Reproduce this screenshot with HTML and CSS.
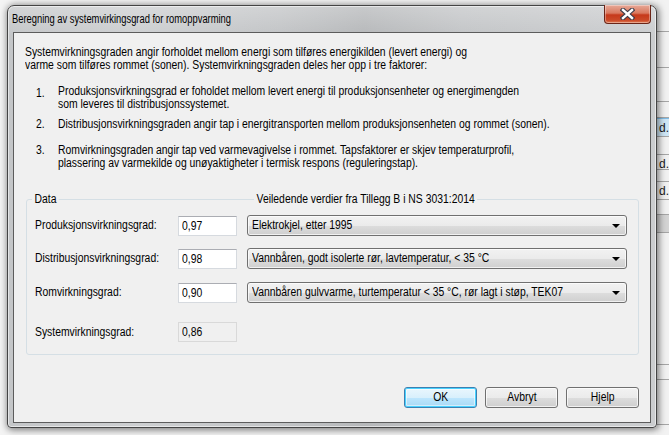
FILE: index.html
```html
<!DOCTYPE html>
<html lang="no">
<head>
  <meta charset="utf-8">
  <title>Beregning av systemvirkingsgrad for romoppvarming</title>
  <link rel="stylesheet" href="styles.css">
</head>
<body>
<div class="desk">
  <div class="window">
    <div class="titlebar">
      <span class="caption n">Beregning av systemvirkingsgrad for romoppvarming</span>
      <div class="close">
        <svg width="15" height="12" viewBox="0 0 15 12">
          <path d="M3 2 L12 10 M12 2 L3 10" stroke="#3b3b4a" stroke-width="4.6" stroke-linecap="square"/>
          <path d="M3 2 L12 10 M12 2 L3 10" stroke="#fff" stroke-width="2.4" stroke-linecap="square"/>
        </svg>
      </div>
    </div>

    <div class="client">
      <p class="intro n">Systemvirkningsgraden angir forholdet mellom energi som tilføres energikilden (levert energi) og<br>
        varme som tilføres rommet (sonen). Systemvirkningsgraden deles her opp i tre faktorer:</p>

      <div class="item item1">
        <span class="num n">1.</span>
        <span class="txt n">Produksjonsvirkningsgrad er foholdet mellom levert energi til produksjonsenheter og energimengden<br>
          som leveres til distribusjonssystemet.</span>
      </div>
      <div class="item item2">
        <span class="num n">2.</span>
        <span class="txt n">Distribusjonsvirkningsgraden angir tap i energitransporten mellom produksjonsenheten og rommet (sonen).</span>
      </div>
      <div class="item item3">
        <span class="num n">3.</span>
        <span class="txt n">Romvirkningsgraden angir tap ved varmevagivelse i rommet. Tapsfaktorer er skjev temperaturprofil,<br>
          plassering av varmekilde og unøyaktigheter i termisk respons (reguleringstap).</span>
      </div>

      <div class="group">
        <div class="group-head">
          <span class="cap cap-data n">Data</span>
          <span class="cap cap-ref n">Veiledende verdier fra Tillegg B i NS 3031:2014</span>
        </div>
        <div class="row row1">
          <span class="label n">Produksjonsvirkningsgrad:</span>
          <div class="field"><span class="n">0,97</span></div>
          <div class="combo"><span class="combo-text n">Elektrokjel, etter 1995</span><i class="arrow"></i></div>
        </div>
        <div class="row row2">
          <span class="label n">Distribusjonsvirkningsgrad:</span>
          <div class="field"><span class="n">0,98</span></div>
          <div class="combo"><span class="combo-text n">Vannbåren, godt isolerte rør, lavtemperatur, &lt; 35 °C</span><i class="arrow"></i></div>
        </div>
        <div class="row row3">
          <span class="label n">Romvirkningsgrad:</span>
          <div class="field"><span class="n">0,90</span></div>
          <div class="combo"><span class="combo-text n">Vannbåren gulvvarme, turtemperatur &lt; 35 °C, rør lagt i støp, TEK07</span><i class="arrow"></i></div>
        </div>
        <div class="row row-sys">
          <span class="label n">Systemvirkningsgrad:</span>
          <div class="field readonly"><span class="n">0,86</span></div>
        </div>
      </div>

      <div class="buttons">
        <button class="btn btn-default"><span class="n mid">OK</span></button>
        <button class="btn"><span class="n mid">Avbryt</span></button>
        <button class="btn"><span class="n mid">Hjelp</span></button>
      </div>
    </div>
  </div>

  <div class="behind">
    <div class="b-row" style="height:32px"></div>
    <div class="b-row" style="height:36px"></div>
    <div class="b-row" style="height:34px"></div>
    <div class="b-row" style="height:16px"></div>
    <div class="b-row b-sel" style="height:19px">d.</div>
    <div class="b-row" style="height:18px"></div>
    <div class="b-row" style="height:15px">d.</div>
    <div class="b-row" style="height:12px"></div>
    <div class="b-row" style="height:18px">d.</div>
    <div class="b-row" style="height:15px"></div>
    <div class="b-row b-gray" style="height:18px"></div>
    <div class="b-row" style="height:132px"></div>
    <div class="b-row" style="height:15px"></div>
    <div class="b-row" style="height:45px"></div>
  </div>
</div>
</body>
</html>
```

FILE: styles.css
```css
html, body { margin: 0; }

body {
  width: 669px;
  height: 435px;
  overflow: hidden;
  background: #f4f4f4;
  font-family: "Liberation Sans", Arial, sans-serif;
  font-size: 12px;
  color: #000;
}

/* the dialog font is a tall, narrow sans */
.n {
  display: inline-block;
  white-space: nowrap;
  transform: scaleX(.865);
  transform-origin: 0 50%;
}
.n.mid { transform-origin: 50% 50%; }

.desk { display: flex; align-items: flex-start; height: 435px; }

/* window frame */
.window {
  position: relative;
  z-index: 1;
  box-sizing: border-box;
  flex: none;
  width: 650px;
  height: 423px;
  margin: 5px 0 0 7px;
  padding: 0 5px 4px;
  border: 1px solid #444;
  border-radius: 7px 7px 4px 4px;
  background:
    linear-gradient(to bottom, rgba(255,255,255,.25), rgba(255,255,255,0) 30px),
    linear-gradient(to right, #c4c6c8 0%, #cdcfd1 20%, #c2c4c6 42%, #b6b8ba 55%, #c3c5c7 70%, #cbcdcf 100%);
  box-shadow: inset 0 0 0 1px rgba(255,255,255,.55), 1px 1px 7px 1px rgba(0,0,0,.5);
}

.titlebar { display: flex; justify-content: space-between; align-items: flex-start; height: 26px; }
.caption.n { margin: 6px 0 0 -1px; line-height: 15px; transform: scaleX(.78); }

.close {
  display: flex;
  align-items: center;
  justify-content: center;
  box-sizing: border-box;
  width: 47px;
  height: 19px;
  margin-top: -1px;
  border: 1px solid #6a2417;
  border-top: none;
  border-radius: 0 0 4px 4px;
  background: linear-gradient(to bottom, #e7a998 0%, #d9795f 45%, #c6391b 55%, #cb4a28 85%, #e07c55 100%);
  box-shadow: inset 0 0 0 1px rgba(255,255,255,.35);
}

/* client area */
.client {
  box-sizing: border-box;
  height: 391px;
  padding: 13px 11px 0;
  border: 1px solid #5c5c5c;
  background: #f0f0f0;
  line-height: 13px;
}

.intro { display: block; margin: 0; }

.item { display: flex; margin-left: 11px; }
.item .num { flex: none; width: 22px; }
.item .txt { display: block; }
.item1 { margin-top: 13px; }
.item1 .num { position: relative; top: 2px; }
.item2 { margin-top: 7px; }
.item3 { margin-top: 13px; }

/* group box */
.group {
  box-sizing: border-box;
  width: 613px;
  margin: 29px 0 0 1px;
  padding: 0 11px 12px 8px;
  border: 1px solid #d5dfe5;
  border-radius: 3px;
}

.group-head,
.row {
  display: grid;
  grid-template-columns: 143px 59px 390px;
}

.group-head { height: 13px; margin-top: -7px; }
.cap { justify-self: start; padding: 0 3px; background: #f0f0f0; }
.cap-data { margin-left: -3px; }
.cap-ref { grid-column: 3; margin-left: 17px; }

.row { align-items: center; }
.row1 { margin-top: 9px; }
.row2 { margin-top: 12px; }
.row3 { margin-top: 13px; }
.row-sys { margin-top: 19px; }

.field {
  box-sizing: border-box;
  height: 20px;
  padding: 0 3px;
  line-height: 18px;
  border: 1px solid #d6dadf;
  border-top-color: #abadb3;
  background: #fff;
}

.field.readonly {
  border-color: #d9d9d9;
  background: #f0f0f0;
}

.combo {
  display: flex;
  align-items: center;
  box-sizing: border-box;
  height: 21px;
  margin-left: 10px;
  padding: 0 6px 0 4px;
  border: 1px solid #707070;
  border-radius: 3px;
  background: linear-gradient(to bottom, #f2f2f2 0%, #ebebeb 50%, #dddddd 51%, #cfcfcf 100%);
  box-shadow: inset 0 0 0 1px rgba(255,255,255,.7);
}

.combo-text { flex: 1; min-width: 0; }

.arrow {
  flex: none;
  width: 0;
  height: 0;
  border-left: 4px solid transparent;
  border-right: 4px solid transparent;
  border-top: 4px solid #000;
}

/* buttons */
.buttons { display: flex; justify-content: flex-end; gap: 8px; margin-top: 32px; }

.btn {
  box-sizing: border-box;
  width: 73px;
  height: 21px;
  padding: 0;
  font: inherit;
  color: #000;
  border: 1px solid #707070;
  border-radius: 3px;
  background: linear-gradient(to bottom, #f2f2f2 0%, #ebebeb 50%, #dddddd 51%, #cfcfcf 100%);
  box-shadow: inset 0 0 0 1px rgba(255,255,255,.7);
}

.btn-default {
  border-color: #3c7fb1;
  background: linear-gradient(to bottom, #eaf6fd 0%, #d9f0fc 50%, #bee6fd 51%, #a7d9f5 100%);
  box-shadow: inset 0 0 0 1px #48d2ff, inset 0 0 0 2px rgba(255,255,255,.5);
}

/* window behind, on the right */
.behind {
  flex: none;
  width: 12px;
  height: 435px;
  background: #f2f2f2;
  line-height: 18px;
}

.b-row {
  box-sizing: border-box;
  padding-left: 2px;
  border-bottom: 1px solid #a6a6a6;
  color: #1a1a1a;
  overflow: hidden;
  white-space: nowrap;
}

.b-sel { background: #cfe7f7; border-top: 1px solid #7fbce6; }
.b-gray { background: #d4d4d4; }
```
